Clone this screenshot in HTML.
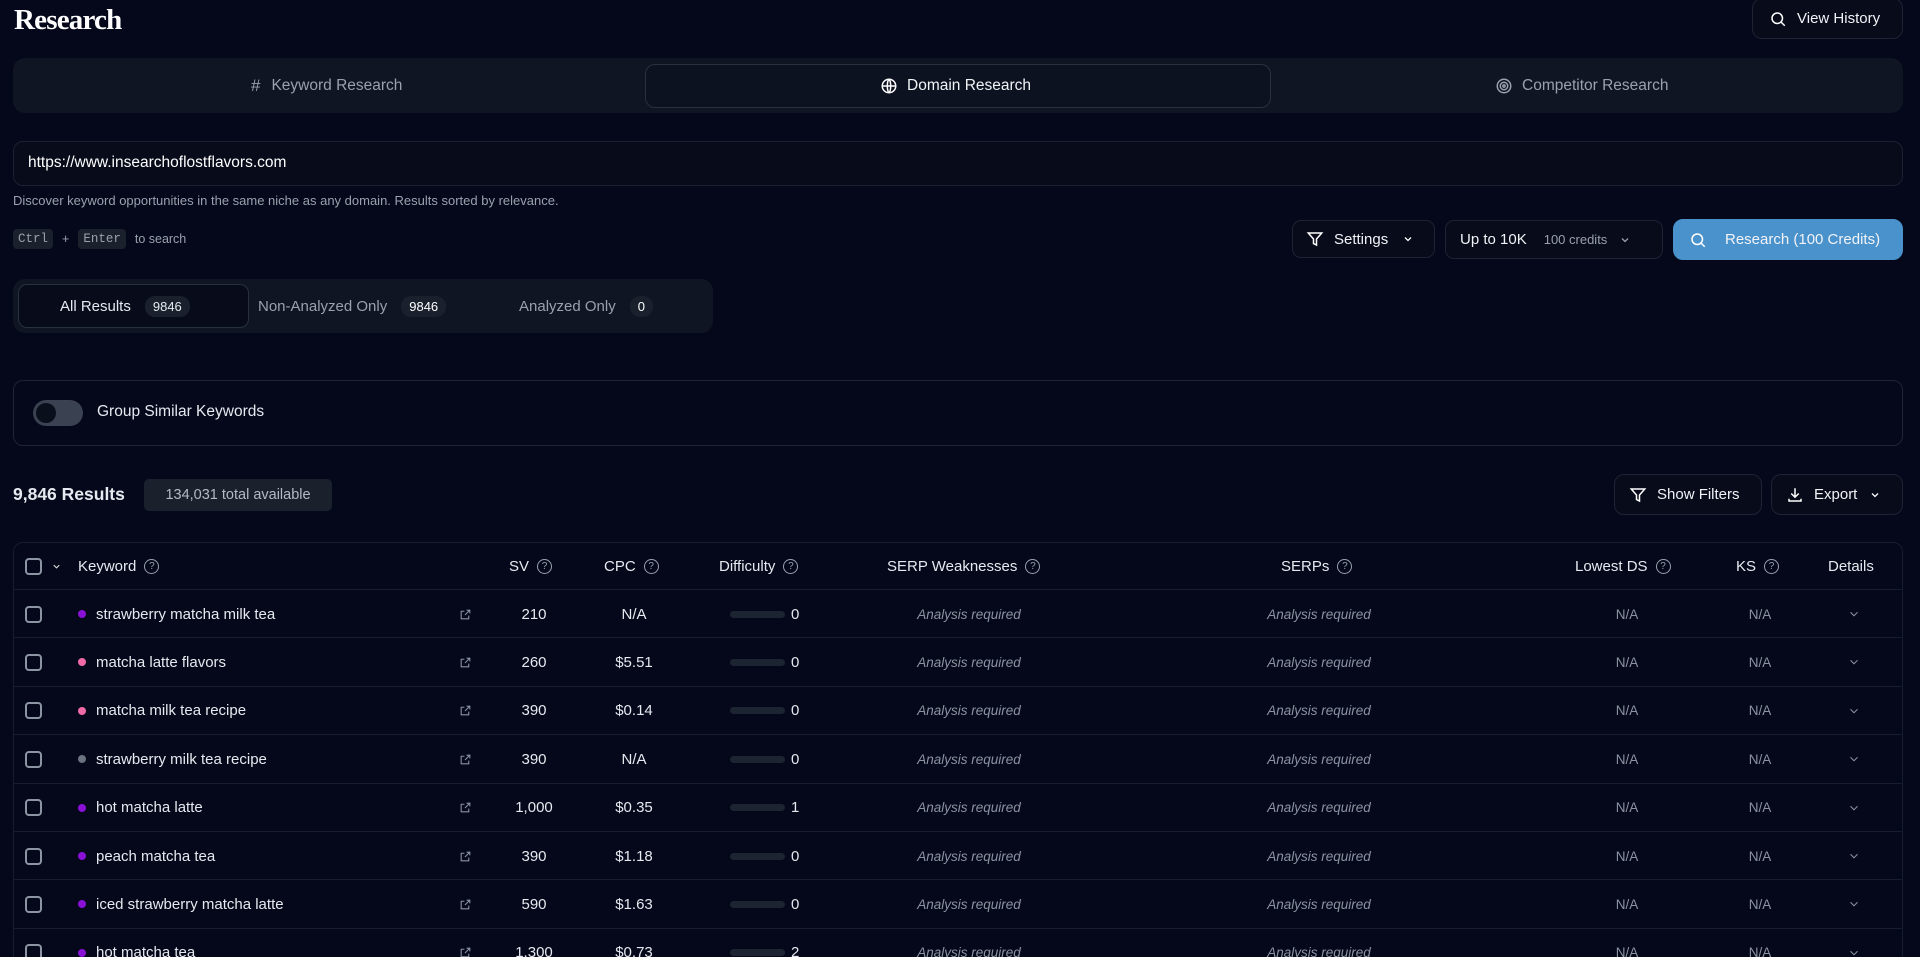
<!DOCTYPE html>
<html style="height:957px;overflow:hidden"><head><meta charset="utf-8"><style>
*{box-sizing:border-box;margin:0;padding:0}
body{width:1920px;height:957px;overflow:hidden;background:#04081a;color:#e6e9ef;font-family:"Liberation Sans",sans-serif;position:relative;font-size:15px}
.a{position:absolute}
.btn{position:absolute;border:1px solid #1c2333;border-radius:9px;background:#070b1a;display:flex;align-items:center;color:#f1f3f6;font-size:15px}
svg{display:block}
.hdr{position:absolute;top:542px;left:13px;width:1890px;height:430px;border:1px solid #161d2b;border-radius:10px}
.row{position:absolute;left:14px;width:1888px;height:48px;border-top:1px solid #161d2b}
.c{position:absolute;top:0;height:48px;display:flex;align-items:center}
.cb{width:17px;height:17px;border:2px solid #8d95a3;border-radius:4px}
.q{display:inline-block;width:15px;height:15px;border:1.3px solid #9aa1ad;border-radius:50%;font-size:10px;color:#9aa1ad;text-align:center;line-height:13px;margin-left:8px}
.it{font-style:italic;color:#8c93a0;font-size:13.5px}
.na{color:#8c93a0;font-size:13.5px}
.bar{width:55px;height:7px;border-radius:4px;background:#1d2431;margin-right:6px}
</style></head><body>
<div class="a" style="left:14px;top:4px;font-family:'Liberation Serif',serif;font-weight:bold;font-size:29px;letter-spacing:-0.8px;color:#fff">Research</div>
<div class="btn" style="left:1752px;top:-2px;width:151px;height:41px;padding-left:16px;border-radius:10px">
<svg width="18" height="18" viewBox="0 0 24 24" fill="none" stroke="#fff" stroke-width="2"><circle cx="11" cy="11" r="7"/><path d="M16.5 16.5L21 21"/></svg><span style="margin-left:10px">View History</span></div>

<div class="a" style="left:13px;top:58px;width:1890px;height:55px;background:#0f1522;border-radius:12px"></div>
<div class="a" style="left:645px;top:64px;width:626px;height:44px;border:1px solid #283142;border-radius:10px;background:#0c1220"></div>
<div class="a" style="left:251px;top:76px;color:#9aa1ad;font-size:15.5px;display:flex;align-items:center"><span style="font-size:17px;margin-right:11px">#</span>Keyword Research</div>
<div class="a" style="left:880px;top:77px;color:#f1f3f6;font-size:15.5px;display:flex;align-items:center"><svg width="18" height="18" viewBox="0 0 24 24" fill="none" stroke="#fff" stroke-width="2"><circle cx="12" cy="12" r="9"/><path d="M3 12h18M12 3c3 3 3 15 0 18M12 3c-3 3-3 15 0 18"/></svg><span style="margin-left:9px">Domain Research</span></div>
<div class="a" style="left:1495px;top:77px;color:#9aa1ad;font-size:15.5px;display:flex;align-items:center"><svg width="18" height="18" viewBox="0 0 24 24" fill="none" stroke="#9aa1ad" stroke-width="2"><circle cx="12" cy="12" r="9"/><circle cx="12" cy="12" r="5"/><circle cx="12" cy="12" r="1.5"/></svg><span style="margin-left:9px">Competitor Research</span></div>

<div class="a" style="left:13px;top:141px;width:1890px;height:45px;border:1px solid #1a2130;border-radius:10px;background:#070b1a"></div>
<div class="a" style="left:28px;top:154px;font-size:15.5px;color:#fff">https://www.insearchoflostflavors.com</div>
<div class="a" style="left:13px;top:193px;font-size:13px;color:#9aa1ad">Discover keyword opportunities in the same niche as any domain. Results sorted by relevance.</div>
<div class="a" style="left:13px;top:229px;display:flex;align-items:center;font-size:12.5px;color:#9aa1ad">
<span style="background:#1a212d;padding:3px 5px;border-radius:4px;font-family:'Liberation Mono',monospace">Ctrl</span><span style="margin:0 9px">+</span><span style="background:#1a212d;padding:3px 5px;border-radius:4px;font-family:'Liberation Mono',monospace">Enter</span><span style="margin-left:9px">to search</span></div>

<div class="btn" style="left:1292px;top:220px;width:143px;height:38px;padding-left:13px"><svg width="18" height="18" viewBox="0 0 24 24" fill="none" stroke="#fff" stroke-width="2"><path d="M3 4h18l-7 8v8l-4-2v-6z"/></svg><span style="margin-left:10px">Settings</span><svg style="margin-left:14px" width="12" height="12" viewBox="0 0 24 24" fill="none" stroke="#fff" stroke-width="2.5"><path d="M6 9l6 6 6-6"/></svg></div>
<div class="btn" style="left:1445px;top:220px;width:218px;height:39px;padding-left:14px"><span>Up to 10K</span><span style="margin-left:17px;font-size:13px;color:#9aa1ad">100 credits</span><svg style="margin-left:12px" width="12" height="12" viewBox="0 0 24 24" fill="none" stroke="#9aa1ad" stroke-width="2.5"><path d="M6 9l6 6 6-6"/></svg></div>
<div class="btn" style="left:1673px;top:219px;width:230px;height:41px;background:#4a92cc;border-color:#4a92cc;padding-left:15px;border-radius:10px"><svg width="18" height="18" viewBox="0 0 24 24" fill="none" stroke="#fff" stroke-width="2"><circle cx="11" cy="11" r="7"/><path d="M16.5 16.5L21 21"/></svg><span style="margin-left:18px">Research (100 Credits)</span></div>

<div class="a" style="left:13px;top:279px;width:700px;height:54px;background:#0f1522;border-radius:12px"></div>
<div class="a" style="left:18px;top:284px;width:231px;height:44px;border:1px solid #283142;border-radius:9px;background:#070b1a"></div>
<div class="a" style="left:60px;top:296px;display:flex;align-items:center;font-size:15px">All Results<span style="margin-left:14px;background:#1a212d;border-radius:10px;padding:3px 8px;font-size:13px">9846</span></div>
<div class="a" style="left:258px;top:296px;display:flex;align-items:center;font-size:15px;color:#9aa1ad">Non-Analyzed Only<span style="margin-left:14px;background:#1a212d;border-radius:10px;padding:3px 8px;font-size:13px;color:#fff">9846</span></div>
<div class="a" style="left:519px;top:296px;display:flex;align-items:center;font-size:15px;color:#9aa1ad">Analyzed Only<span style="margin-left:14px;background:#1a212d;border-radius:10px;padding:3px 8px;font-size:13px;color:#fff">0</span></div>

<div class="a" style="left:13px;top:380px;width:1890px;height:66px;border:1px solid #1e2535;border-radius:10px"></div>
<div class="a" style="left:33px;top:400px;width:50px;height:26px;border-radius:13px;background:#3a4150"><div style="position:absolute;left:3px;top:3px;width:20px;height:20px;border-radius:50%;background:#0a0f1c"></div></div>
<div class="a" style="left:97px;top:403px;font-size:15.5px">Group Similar Keywords</div>

<div class="a" style="left:13px;top:484px;font-size:17.5px;font-weight:bold">9,846 Results</div>
<div class="a" style="left:144px;top:479px;width:188px;height:32px;background:#1a212d;border-radius:5px;color:#b4bac4;font-size:14.5px;display:flex;align-items:center;justify-content:center">134,031 total available</div>
<div class="btn" style="left:1614px;top:474px;width:148px;height:41px;padding-left:14px;border-radius:10px"><svg width="18" height="18" viewBox="0 0 24 24" fill="none" stroke="#fff" stroke-width="2"><path d="M3 4h18l-7 8v8l-4-2v-6z"/></svg><span style="margin-left:10px">Show Filters</span></div>
<div class="btn" style="left:1771px;top:474px;width:132px;height:41px;padding-left:14px;border-radius:10px"><svg width="18" height="18" viewBox="0 0 24 24" fill="none" stroke="#fff" stroke-width="2"><path d="M12 3v12M7 10l5 5 5-5M4 17v3h16v-3"/></svg><span style="margin-left:10px">Export</span><svg style="margin-left:12px" width="12" height="12" viewBox="0 0 24 24" fill="none" stroke="#fff" stroke-width="2.5"><path d="M6 9l6 6 6-6"/></svg></div>

<div class="hdr"></div>
<div class="row" style="top:542px;border-top:none;height:47px;font-size:15px">
<div class="c" style="left:11px"><div class="cb"></div><svg style="margin-left:9px" width="11" height="11" viewBox="0 0 24 24" fill="none" stroke="#ddd" stroke-width="2.5"><path d="M6 9l6 6 6-6"/></svg></div>
<div class="c" style="left:64px">Keyword<span class="q">?</span></div>
<div class="c" style="left:495px">SV<span class="q">?</span></div>
<div class="c" style="left:590px">CPC<span class="q">?</span></div>
<div class="c" style="left:705px">Difficulty<span class="q">?</span></div>
<div class="c" style="left:873px">SERP Weaknesses<span class="q">?</span></div>
<div class="c" style="left:1267px">SERPs<span class="q">?</span></div>
<div class="c" style="left:1561px">Lowest DS<span class="q">?</span></div>
<div class="c" style="left:1722px">KS<span class="q">?</span></div>
<div class="c" style="left:1814px">Details</div>
</div>
<div id="rows"></div>
<script>
var d=[["strawberry matcha milk tea","210","N/A","0","#8a12d6"],["matcha latte flavors","260","$5.51","0","#f06aa8"],["matcha milk tea recipe","390","$0.14","0","#f06aa8"],["strawberry milk tea recipe","390","N/A","0","#6b7280"],["hot matcha latte","1,000","$0.35","1","#8a12d6"],["peach matcha tea","390","$1.18","0","#8a12d6"],["iced strawberry matcha latte","590","$1.63","0","#8a12d6"],["hot matcha tea","1,300","$0.73","2","#8a12d6"]];
var h="";
d.forEach(function(r,i){var t=589+i*48.4;
h+='<div class="row" style="top:'+t+'px">'+
'<div class="c" style="left:11px"><div class="cb"></div></div>'+
'<div class="c" style="left:64px"><span style="width:8px;height:8px;border-radius:50%;background:'+r[4]+';margin-right:10px"></span>'+r[0]+'</div>'+
'<div class="c" style="left:445px"><svg width="13" height="13" viewBox="0 0 24 24" fill="none" stroke="#8c93a0" stroke-width="2"><path d="M14 4h6v6M20 4l-9 9M18 14v6H4V6h6"/></svg></div>'+
'<div class="c" style="left:470px;width:100px;justify-content:center">'+r[1]+'</div>'+
'<div class="c" style="left:570px;width:100px;justify-content:center">'+r[2]+'</div>'+
'<div class="c" style="left:716px"><div class="bar"></div>'+r[3]+'</div>'+
'<div class="c it" style="left:855px;width:200px;justify-content:center">Analysis required</div>'+
'<div class="c it" style="left:1205px;width:200px;justify-content:center">Analysis required</div>'+
'<div class="c na" style="left:1563px;width:100px;justify-content:center">N/A</div>'+
'<div class="c na" style="left:1696px;width:100px;justify-content:center">N/A</div>'+
'<div class="c" style="left:1832px;width:16px;justify-content:center"><svg width="14" height="14" viewBox="0 0 24 24" fill="none" stroke="#8c93a0" stroke-width="1.8"><path d="M6 9l6 6 6-6"/></svg></div>'+
'</div>';});
document.getElementById("rows").innerHTML=h;
</script>
</body></html>
